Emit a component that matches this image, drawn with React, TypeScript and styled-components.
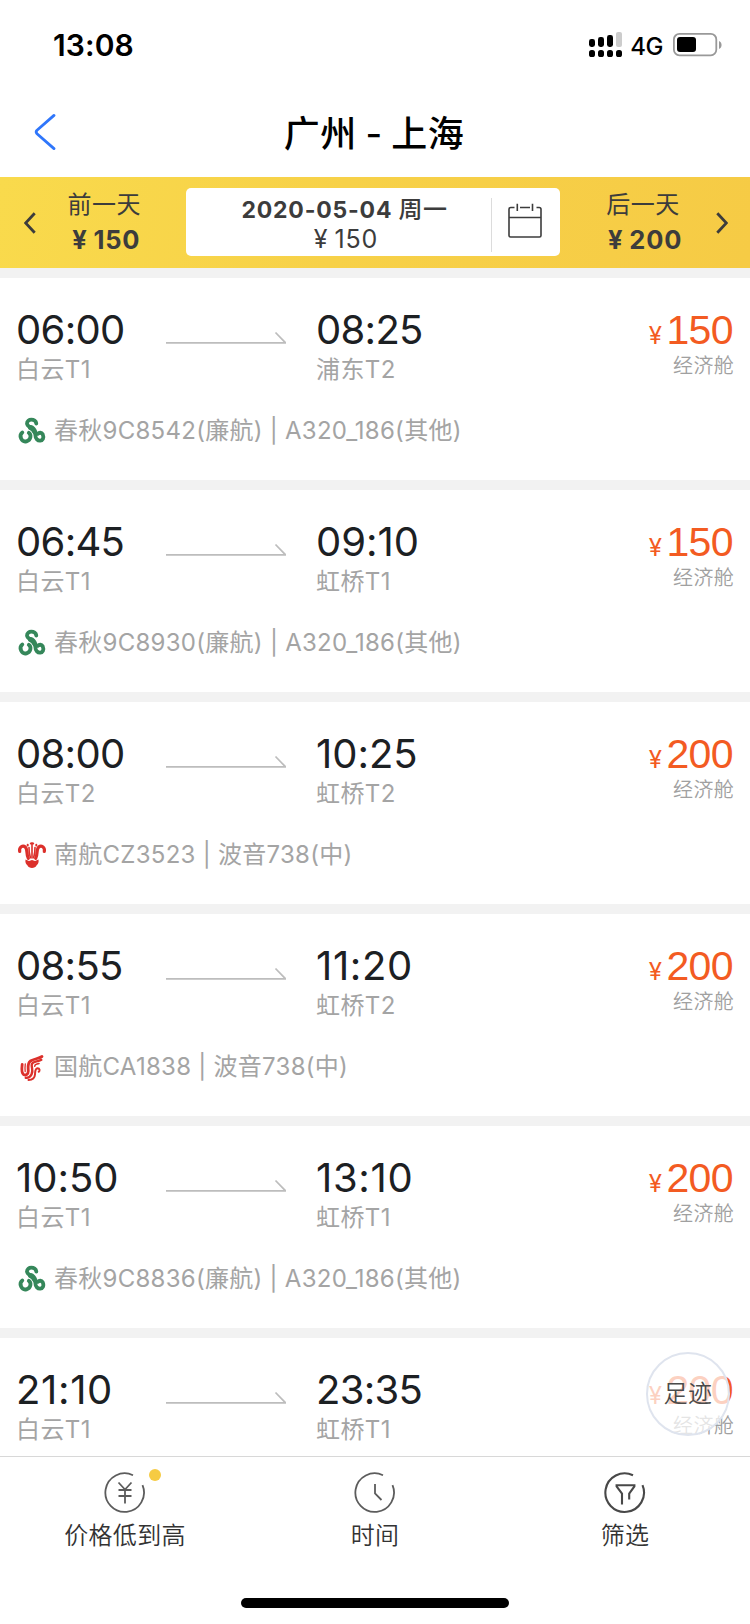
import React from "react";
import styled, { createGlobalStyle } from "styled-components";

const GlobalStyle = createGlobalStyle`
  * { box-sizing: border-box; }
  body {
    margin: 0;
    background: #fff;
    font-family: Inter, "Noto Sans CJK SC", sans-serif;
    color: #3c3c3c;
  }
`;

const Screen = styled.div`
  position: relative;
  display: flex;
  flex-direction: column;
  width: 750px;
  height: 1624px;
  overflow: hidden;
  background: #fff;
`;

const StatusBar = styled.div`
  display: flex;
  align-items: center;
  height: 88px;
  padding: 2px 27px 0 53px;
  color: #000;
`;

const Clock = styled.span`
  flex: 1;
  font-size: 30px;
  font-weight: 600;
  line-height: 36px;
  letter-spacing: 0.1px;
`;

const Network = styled.span`
  margin: 4px 10px 0 8px;
  font-size: 24px;
  font-weight: 500;
  line-height: 28px;
  letter-spacing: -0.5px;
`;

const NavBar = styled.header`
  display: grid;
  grid-template-columns: 100px 1fr 100px;
  align-items: center;
  height: 89px;
  flex: none;
  padding-bottom: 1px;
`;

const BackButton = styled.button`
  display: flex;
  padding: 0 0 0 34px;
  border: 0;
  background: none;
`;

const Title = styled.h1`
  margin: 3px 2px 0 0;
  text-align: center;
  color: #000;
  font-size: 36px;
  font-weight: 500;
  line-height: 44px;
  letter-spacing: 0.5px;
  word-spacing: -1.5px;
  white-space: pre;
`;

const DateBar = styled.section`
  display: flex;
  flex: none;
  height: 91px;
  background: linear-gradient(100deg, #f9da4c 0%, #f7d148 45%, #f6cb45 100%);
`;

const DayButton = styled.button<{ $side: "prev" | "next" }>`
  display: flex;
  align-items: center;
  flex-direction: ${(p) => (p.$side === "prev" ? "row" : "row-reverse")};
  justify-content: space-between;
  width: ${(p) => (p.$side === "prev" ? 186 : 190)}px;
  padding: ${(p) => (p.$side === "prev" ? "0 43px 0 24px" : "0 22px 0 46px")};
  border: 0;
  background: none;
  color: #3c3c3c;
  font-family: inherit;
`;

const DayText = styled.span`
  display: flex;
  flex-direction: column;
  align-items: center;
  margin-top: -1px;
`;

const DayLabel = styled.span`
  margin-right: 2px;
  font-size: 24px;
  line-height: 35px;
  letter-spacing: 0.5px;
`;

const Fare = styled.span<{ $bold?: boolean }>`
  display: flex;
  gap: 6px;
  margin-left: ${(p) => (p.$bold ? 2 : 3)}px;
  font-size: ${(p) => (p.$bold ? 25.5 : 25)}px;
  font-weight: ${(p) => (p.$bold ? 650 : 400)};
  line-height: ${(p) => (p.$bold ? 35 : 31)}px;
  letter-spacing: ${(p) => (p.$bold ? 0.8 : 0.9)}px;
`;

const DatePicker = styled.div`
  display: flex;
  width: 374px;
  height: 68px;
  margin-top: 11px;
  border-radius: 5px;
  background: #fff;
`;

const CurrentDay = styled.div`
  display: flex;
  flex: 1;
  flex-direction: column;
  align-items: center;
  padding: 8px 0 0 12px;
`;

const CurrentDate = styled.span`
  font-size: 23px;
  font-weight: 700;
  line-height: 28px;
  letter-spacing: 0.8px;
  white-space: pre;
`;

const Weekday = styled.span`
  font-size: 24px;
  font-weight: 500;
  letter-spacing: 0.5px;
`;

const CalendarCell = styled.div`
  display: flex;
  align-items: center;
  justify-content: center;
  width: 69px;
  margin: 10px 0 4px;
  padding: 0 2px 8px 0;
  border-left: 1px solid #dcdcdc;
`;

const FlightList = styled.main`
  flex: 1;
  min-height: 0;
  overflow: hidden;
  background: #f2f2f2;
`;

const FlightCard = styled.article`
  height: 202px;
  margin-top: 10px;
  padding: 28px 17px 0 16px;
  background: #fff;
`;

const Schedule = styled.div`
  display: grid;
  grid-template-columns: 150px 150px 1fr auto;
  height: 111px;
`;

const Stop = styled.div`
  display: flex;
  flex-direction: column;
`;

const Time = styled.span<{ $tracking: number }>`
  color: #1c2023;
  font-size: 40px;
  line-height: 48px;
  letter-spacing: ${(p) => p.$tracking}px;
`;

const Terminal = styled.span`
  color: #a4a4a4;
  font-size: 24px;
  font-weight: 370;
  line-height: 32px;
  letter-spacing: 0.4px;
`;

const Route = styled.div`
  padding-top: 23px;
`;

const PriceColumn = styled.div`
  display: flex;
  grid-column: 4;
  flex-direction: column;
  align-items: flex-end;
`;

const Price = styled.span`
  display: flex;
  align-items: baseline;
  gap: 5px;
  color: #f35b22;
  font-family: "Liberation Sans", Arial, sans-serif;
  font-size: 41px;
  line-height: 48px;
  letter-spacing: -0.6px;
`;

const Currency = styled.span`
  font-family: Inter, sans-serif;
  font-size: 24px;
  font-weight: 370;
`;

const Cabin = styled.span`
  margin: -6px -1px 0 0;
  color: #a0a0a0;
  font-size: 20px;
  font-weight: 350;
  line-height: 24px;
  letter-spacing: 0.3px;
`;

const Carrier = styled.div`
  display: flex;
  align-items: center;
  gap: 6px;
  height: 28px;
  color: #a4a4a4;
  font-size: 24px;
  font-weight: 370;
  line-height: 28px;
  letter-spacing: 0.27px;
  white-space: pre;

  svg {
    margin-bottom: 3px;
  }
`;

const TrailButton = styled.button`
  position: absolute;
  right: 20px;
  bottom: 188px;
  width: 84px;
  height: 84px;
  padding: 0 0 5px;
  border: 2px solid #dfe4ee;
  border-radius: 50%;
  background: rgba(255, 255, 255, 0.72);
  color: #4a4a4a;
  font-family: inherit;
  font-size: 24px;
  font-weight: 350;
  letter-spacing: 0.5px;
`;

const TabBar = styled.nav`
  display: grid;
  grid-template-columns: repeat(3, 1fr);
  flex: none;
  height: 142px;
  border-top: 1px solid #d8d8d8;
  background: #fff;
`;

const Tab = styled.button`
  display: flex;
  flex-direction: column;
  align-items: center;
  padding: 15px 0 0;
  border: 0;
  background: none;
  color: #333;
  font-family: inherit;
  font-size: 24px;
  font-weight: 350;
  line-height: 34px;
  letter-spacing: 0.3px;
`;

const TabIcon = styled.span`
  position: relative;
  display: flex;
  margin-bottom: 5px;
`;

const Dot = styled.i`
  position: absolute;
  top: -3px;
  right: -15px;
  width: 12px;
  height: 12px;
  border-radius: 50%;
  background: #f6cb43;
`;

const HomeArea = styled.div`
  display: flex;
  flex: none;
  justify-content: center;
  height: 26px;
`;

const HomeIndicator = styled.div`
  width: 268px;
  height: 10px;
  border-radius: 5px;
  background: #000;
`;

const SignalIcon = () => (
  <svg width="33" height="26" viewBox="0 0 33 26">
    <rect x="0" y="7" width="6" height="8" rx="2.4" />
    <rect x="9" y="5" width="6" height="10" rx="2.4" />
    <rect x="18" y="3" width="6" height="12" rx="2.4" />
    <rect x="27" y="0" width="6" height="15" rx="2" fill="#ccc" />
    {[0, 9, 18, 27].map((x) => (
      <rect key={x} x={x} y="18" width="6" height="7" rx="2.6" />
    ))}
  </svg>
);

const BatteryIcon = () => (
  <svg width="50" height="24" viewBox="0 0 50 24">
    <rect x="0.9" y="0.9" width="42.4" height="21.4" rx="5.5" fill="none" stroke="#999" strokeWidth="1.8" />
    <rect x="4" y="4" width="19" height="15" rx="3" />
    <path d="M46 8c3.4 1.2 3.4 6.800 0 8z" fill="#999" />
  </svg>
);

const BackIcon = () => (
  <svg width="22" height="38" viewBox="0 0 22 38" fill="none" stroke="#2f76fb" strokeWidth="2.8" strokeLinecap="round" strokeLinejoin="round">
    <path d="M20 2.400 3 17.300Q1.400 19 3 20.700L20 35.600" />
  </svg>
);

const Chevron = ({ flip }: { flip?: boolean }) => (
  <svg width="12" height="22" viewBox="0 0 12 22" fill="none" stroke="#3c3c3c" strokeWidth="2.8">
    <path d={flip ? "M1.300 1.200 10.400 11 1.300 20.800" : "M10.700 1.200 1.600 11 10.700 20.800"} />
  </svg>
);

const CalendarIcon = () => (
  <svg width="34" height="36" viewBox="0 0 34 36" fill="none" stroke="#3c3c3c" strokeWidth="1.600">
    <path d="M6.500 4.500H2.800Q1 4.500 1 6.300V32.500Q1 34 2.500 34H31.500Q33 34 33 32.500V6.300Q33 4.500 31.200 4.500H28.500M12 4.500H22M1 14.500H33M9.300.8V8M24.500.8V8" />
  </svg>
);

const RouteArrow = () => (
  <svg width="120" height="14" viewBox="0 0 120 14" fill="none" stroke="#bdbdbd" strokeWidth="1.700">
    <path d="M0 11.800H119.500L109.500 1.500" />
  </svg>
);

const SpringLogo = () => (
  <svg width="32" height="32" viewBox="0 0 32 32" fill="none" stroke="#35875a" strokeWidth="3.800" strokeLinecap="round">
    <path d="M20.300 9.500C19.800 4.500 10.800 4.300 11 9.700C11.300 13.500 19.300 14.500 19.300 20.500C19.300 29.500 30 28 26.700 20.300C25.500 18.300 23.200 18.300 22 19.800" />
    <path d="M6.300 18.500C2.500 21.500 5.500 28.500 10.500 27.300C15 26 15.600 21 12.800 18.800" />
    <path d="M14.500 13.500C16.300 14 18 15.600 18.800 18" strokeWidth="5" />
  </svg>
);

const SouthernLogo = () => (
  <svg width="32" height="32" viewBox="0 0 32 32" fill="none" stroke="#dc302b" strokeLinecap="round">
    <path d="M3.700 13.500C2.800 9 6.800 6.800 9.300 9C12 11.500 10 16 12.300 20.300M28.300 13.500C29.200 9 25.200 6.800 22.700 9C20 11.500 22 16 19.700 20.300" strokeWidth="3.200" />
    <path d="M13 9.500C12.800 13.500 13.600 17 14.400 19.800M19 9.500C19.200 13.500 18.400 17 17.600 19.800" strokeWidth="1.600" />
    <path d="M16 5V20" strokeWidth="1.600" />
    <path d="M11.700 6.800v.8M20.300 6.800v.8M14.800 5.500h2.400" strokeWidth="2" />
    <path d="M9.500 21.500 13 23 16 22 19 23 22.500 21.500C23 24.500 22 26 20.800 27C19.800 29.200 18 30 16 30S12.200 29.200 11.200 27C10 26 9 24.500 9.500 21.500Z" fill="#dc302b" stroke="none" />
  </svg>
);

const AirChinaLogo = () => (
  <svg width="32" height="32" viewBox="0 0 32 32" fill="none" stroke="#dc302b" strokeLinecap="round">
    <path d="M6.200 14.500C5.800 18 5 22.500 7.500 24.500C10 26 12.300 24 12.300 21C12.300 18 11 13.500 14.500 11C18 8.500 22.500 9 26 6.500" strokeWidth="2.800" />
    <path d="M9.300 13.800C9 16.500 8.700 19 9.200 21.500" strokeWidth="1.300" />
    <path d="M25.300 9.800C21.500 12.300 16 10.500 15.700 15C15.600 18.500 17.500 20.500 15.500 24.500C14.200 27 12 28 9.800 27.800" strokeWidth="2.400" />
    <path d="M12.500 30C16.500 29.800 18.800 27.500 19 24.500C19.200 21 19 18.500 21.500 18.200C24 18.200 24 21 22.700 21.800" strokeWidth="2" />
    <path d="M23 13.500C20.500 14.500 18.800 14 18.700 16.300" strokeWidth="1.600" />
  </svg>
);

const logos = { spring: SpringLogo, southern: SouthernLogo, airChina: AirChinaLogo };

/* Ring with a notch at the upper right, shared by the three tab icons. */
const RingIcon = ({ heavy, children }: { heavy?: boolean; children: React.ReactNode }) => (
  <svg width="42" height="42" viewBox="0 0 42 42" fill="none" stroke={heavy ? "#484848" : "#5c5c5c"} strokeWidth={heavy ? 2.1 : 1.8}>
    <path d="M29 3.200A19.300 19.300 0 1 0 38.500 13.200" />
    {children}
  </svg>
);

const FLIGHTS: {
  from: [string, string];
  to: [string, string];
  price: number;
  logo: keyof typeof logos;
  carrier: string;
}[] = [
  { from: ["06:00", "白云T1"], to: ["08:25", "浦东T2"], price: 150, logo: "spring", carrier: "春秋9C8542(廉航) | A320_186(其他)" },
  { from: ["06:45", "白云T1"], to: ["09:10", "虹桥T1"], price: 150, logo: "spring", carrier: "春秋9C8930(廉航) | A320_186(其他)" },
  { from: ["08:00", "白云T2"], to: ["10:25", "虹桥T2"], price: 200, logo: "southern", carrier: "南航CZ3523 | 波音738(中)" },
  { from: ["08:55", "白云T1"], to: ["11:20", "虹桥T2"], price: 200, logo: "airChina", carrier: "国航CA1838 | 波音738(中)" },
  { from: ["10:50", "白云T1"], to: ["13:10", "虹桥T1"], price: 200, logo: "spring", carrier: "春秋9C8836(廉航) | A320_186(其他)" },
  { from: ["21:10", "白云T1"], to: ["23:35", "虹桥T1"], price: 200, logo: "spring", carrier: "" },
];

/* Times with narrow "1" digits get looser spacing so the columns look even. */
const trackingFor = (time: string) => -0.7 + 0.68 * (time.split("1").length - 1);

const StopInfo = ({ stop: [time, terminal] }: { stop: [string, string] }) => (
  <Stop>
    <Time $tracking={trackingFor(time)}>{time}</Time>
    <Terminal>{terminal}</Terminal>
  </Stop>
);

const Flight = ({ flight }: { flight: (typeof FLIGHTS)[number] }) => {
  const Logo = logos[flight.logo];
  return (
    <FlightCard>
      <Schedule>
        <StopInfo stop={flight.from} />
        <Route>
          <RouteArrow />
        </Route>
        <StopInfo stop={flight.to} />
        <PriceColumn>
          <Price>
            <Currency>¥</Currency>
            {flight.price}
          </Price>
          <Cabin>经济舱</Cabin>
        </PriceColumn>
      </Schedule>
      {flight.carrier && (
        <Carrier>
          <Logo />
          {flight.carrier}
        </Carrier>
      )}
    </FlightCard>
  );
};

export default function App() {
  return (
    <Screen>
      <GlobalStyle />
      <StatusBar>
        <Clock>13:08</Clock>
        <SignalIcon />
        <Network>4G</Network>
        <BatteryIcon />
      </StatusBar>
      <NavBar>
        <BackButton aria-label="返回">
          <BackIcon />
        </BackButton>
        <Title>广州 - 上海</Title>
      </NavBar>
      <DateBar>
        <DayButton $side="prev">
          <Chevron />
          <DayText>
            <DayLabel>前一天</DayLabel>
            <Fare $bold>
              <span>¥</span>150
            </Fare>
          </DayText>
        </DayButton>
        <DatePicker>
          <CurrentDay>
            <CurrentDate>
              2020-05-04 <Weekday>周一</Weekday>
            </CurrentDate>
            <Fare>
              <span>¥</span>150
            </Fare>
          </CurrentDay>
          <CalendarCell>
            <CalendarIcon />
          </CalendarCell>
        </DatePicker>
        <DayButton $side="next">
          <Chevron flip />
          <DayText>
            <DayLabel>后一天</DayLabel>
            <Fare $bold>
              <span>¥</span>200
            </Fare>
          </DayText>
        </DayButton>
      </DateBar>
      <FlightList>
        {FLIGHTS.map((f) => (
          <Flight key={f.from[0]} flight={f} />
        ))}
      </FlightList>
      <TrailButton>足迹</TrailButton>
      <TabBar>
        <Tab>
          <TabIcon>
            <RingIcon>
              <path d="M14.500 10.500 21 17.500 27.500 10.500M21 17.500V31.500M14.500 18H27.500M14.500 24H27.500" />
            </RingIcon>
            <Dot />
          </TabIcon>
          价格低到高
        </Tab>
        <Tab>
          <TabIcon>
            <RingIcon>
              <path d="M21 12V21.500L27.500 28" />
            </RingIcon>
          </TabIcon>
          时间
        </Tab>
        <Tab>
          <TabIcon>
            <RingIcon heavy>
              <path d="M18 32.500V21.500L12.600 14.500V13.300H30.400V14.500L25.200 21.500V27.500" />
            </RingIcon>
          </TabIcon>
          筛选
        </Tab>
      </TabBar>
      <HomeArea>
        <HomeIndicator />
      </HomeArea>
    </Screen>
  );
}
